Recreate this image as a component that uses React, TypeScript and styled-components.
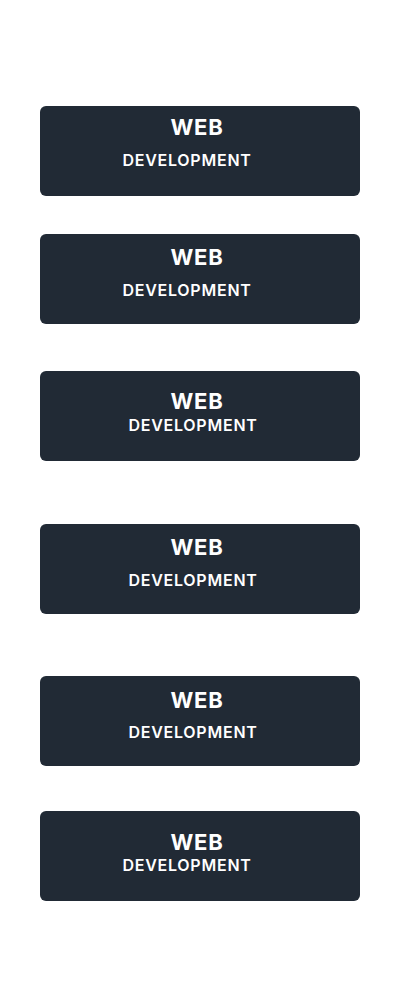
import React from "react";
import styled, { createGlobalStyle } from "styled-components";

const GlobalStyle = createGlobalStyle`
  html, body {
    margin: 0;
    padding: 0;
    background: #ffffff;
  }
  body {
    font-family: Inter, "Noto Sans", sans-serif;
  }
`;

const Page = styled.div`
  width: 400px;
  min-height: 1000px;
  box-sizing: border-box;
  padding: 106px 40px 0 40px;
  display: flex;
  flex-direction: column;
`;

const Card = styled.div<{ $mt: number; $pt: number; $gap: number }>`
  margin-top: ${(p) => p.$mt}px;
  height: 90px;
  box-sizing: border-box;
  background: #212a35;
  border-radius: 6px;
  padding-top: ${(p) => p.$pt}px;
  display: flex;
  flex-direction: column;
  gap: ${(p) => p.$gap}px;
  color: #ffffff;
`;

const Title = styled.div<{ $shift: number }>`
  font-size: 22px;
  line-height: 22px;
  font-weight: 700;
  letter-spacing: 0.8px;
  text-align: center;
  padding-right: ${(p) => p.$shift * 2}px;
`;

const Subtitle = styled.div<{ $shift: number }>`
  font-size: 16px;
  line-height: 16px;
  font-weight: 600;
  letter-spacing: 0.75px;
  text-align: center;
  padding-right: ${(p) => p.$shift * 2}px;
`;

const cards = [
  { mt: 0, pt: 10, gap: 14, dev: 13 },
  { mt: 38, pt: 12, gap: 14, dev: 13 },
  { mt: 47, pt: 19, gap: 5, dev: 7 },
  { mt: 63, pt: 12, gap: 14, dev: 7 },
  { mt: 62, pt: 13, gap: 13, dev: 7 },
  { mt: 45, pt: 20, gap: 4, dev: 13 },
];

export default function App() {
  return (
    <>
      <GlobalStyle />
      <Page>
        {cards.map((c, i) => (
          <Card key={i} $mt={c.mt} $pt={c.pt} $gap={c.gap}>
            <Title $shift={3}>WEB</Title>
            <Subtitle $shift={c.dev}>DEVELOPMENT</Subtitle>
          </Card>
        ))}
      </Page>
    </>
  );
}
